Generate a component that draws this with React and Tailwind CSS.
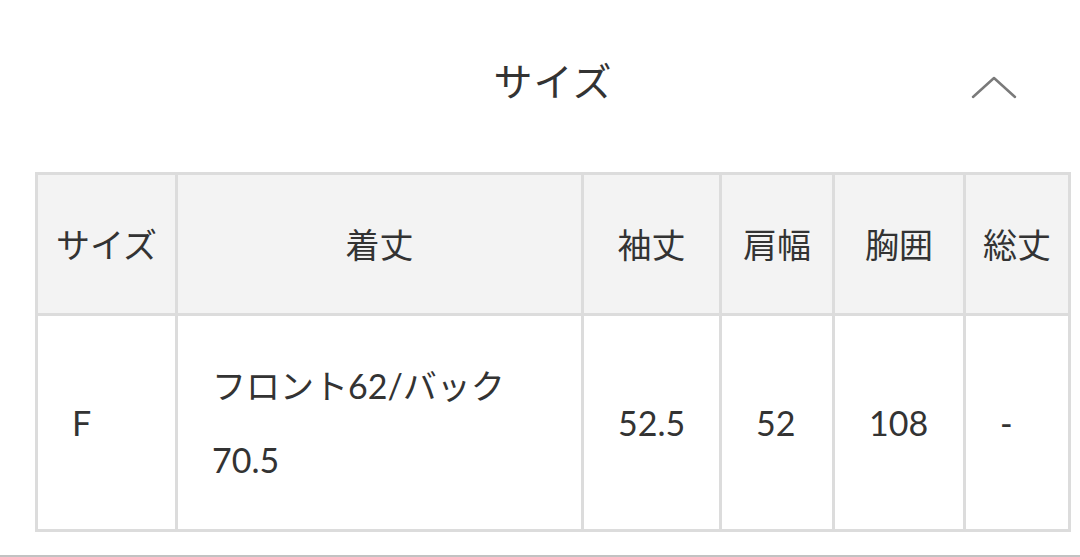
const headers = [
  { label: "サイズ", w: "w-[137px]" },
  { label: "着丈", w: "w-[403px]" },
  { label: "袖丈", w: "w-[135px]" },
  { label: "肩幅", w: "w-[110px]" },
  { label: "胸囲", w: "w-[128px]" },
  { label: "総丈", w: "w-[102px]" },
];

const row = [
  "F",
  <>
    フロント62/バック
    <br />
    70.5
  </>,
  "52.5",
  "52",
  "108",
  "-",
];

export default function App() {
  return (
    <div
      className="w-[1080px] h-[557px] bg-white text-[#333] overflow-hidden"
      style={{ fontFamily: 'Lato, "Noto Sans CJK JP", sans-serif' }}
    >
      <div className="pl-[35px] pr-[9px]">
        {/* section title + collapse toggle */}
        <div className="grid grid-cols-[1fr_auto_1fr] items-center h-[162px]">
          <div />
          <h2 className="text-[39px] leading-none font-normal tracking-[1px]">サイズ</h2>
          <div className="flex justify-end pr-[54px] pt-[14px]">
            <svg width="46" height="24" viewBox="0 0 46 24" fill="none">
              <polyline
                points="2,21 23,2 44,21"
                stroke="#7a7a7a"
                strokeWidth="2.5"
                strokeLinecap="round"
                strokeLinejoin="round"
              />
            </svg>
          </div>
        </div>

        {/* size table */}
        <div className="mt-[10px] bg-[#dcdcdc] p-[3px] flex flex-col gap-[3px] text-[34px]">
          <div className="flex gap-[3px] h-[138px]">
            {headers.map((h) => (
              <div
                key={h.label}
                className={`${h.w} bg-[#f3f3f3] flex items-center justify-center`}
              >
                {h.label}
              </div>
            ))}
          </div>
          <div className="flex gap-[3px] h-[213px]">
            {row.map((c, i) => (
              <div
                key={i}
                className={`${headers[i].w} bg-white flex items-center pl-[34px] pr-[35px] leading-[74px]`}
              >
                <div>{c}</div>
              </div>
            ))}
          </div>
        </div>
      </div>

      <div className="mt-[23px] h-[2px] bg-[#c2c2c2]" />
    </div>
  );
}
